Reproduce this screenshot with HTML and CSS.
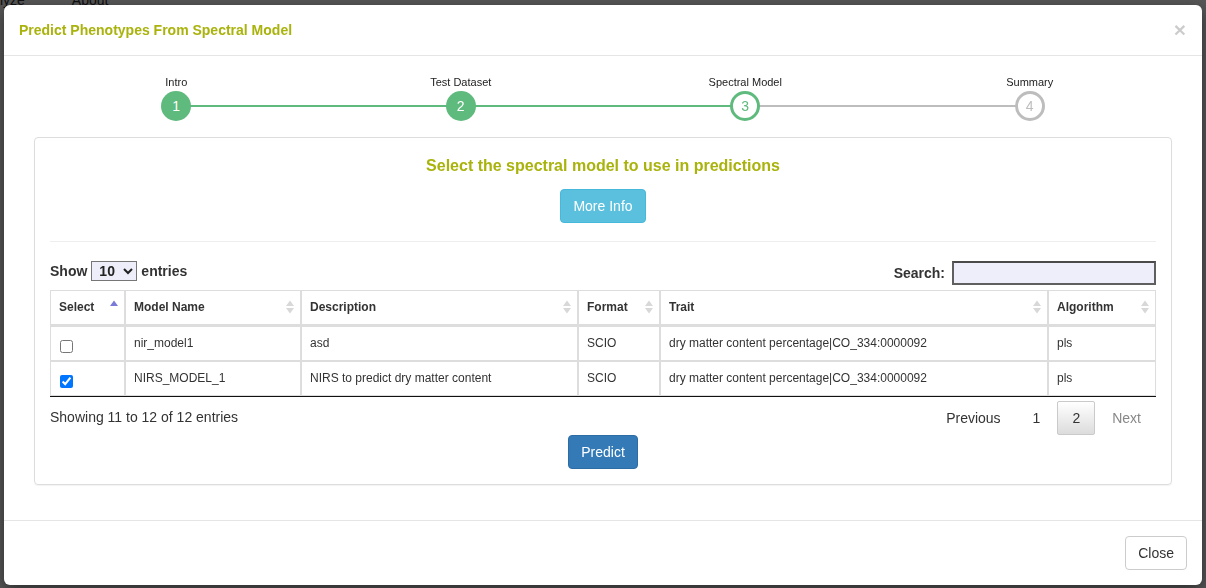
FILE: index.html
```html
<!DOCTYPE html>
<html>
<head>
<meta charset="utf-8">
<link rel="stylesheet" href="styles.css">
</head>
<body>
<nav class="topnav"><span>Analyze</span><span>About</span></nav>
<div class="backdrop"></div>
<div class="modal">
  <div class="modal-header">
    <h4 class="modal-title">Predict Phenotypes From Spectral Model</h4>
    <span class="close">&times;</span>
  </div>
  <div class="modal-body">
    <div class="stepper">
      <div class="step done"><div class="step-label">Intro</div><div class="step-circle">1</div></div>
      <div class="step done"><div class="step-label">Test Dataset</div><div class="step-circle">2</div></div>
      <div class="step current"><div class="step-label">Spectral Model</div><div class="step-circle">3</div></div>
      <div class="step todo"><div class="step-label">Summary</div><div class="step-circle">4</div></div>
    </div>
    <div class="panel">
      <h3 class="panel-heading">Select the spectral model to use in predictions</h3>
      <div class="center"><button class="btn btn-info">More Info</button></div>
      <hr class="divider">
      <div class="controls">
        <label class="length">Show <select class="len-select"><option>10</option></select> entries</label>
        <label class="search">Search: <input type="text" class="search-input"></label>
      </div>
      <table class="dtable">
        <colgroup>
          <col style="width:75px"><col style="width:176px"><col style="width:277px"><col style="width:82px"><col style="width:388px"><col style="width:108px">
        </colgroup>
        <thead>
          <tr>
            <th><span>Select</span><svg class="sort" width="10" height="16" viewBox="0 0 10 16"><path d="M1 7 L5 1.5 L9 7 Z" fill="#7a7ad8"/></svg></th>
            <th><span>Model Name</span><svg class="sort" width="10" height="16" viewBox="0 0 10 16"><path d="M1 7 L5 1.5 L9 7 Z M1 9 L5 14.5 L9 9 Z" fill="#d8d8d8"/></svg></th>
            <th><span>Description</span><svg class="sort" width="10" height="16" viewBox="0 0 10 16"><path d="M1 7 L5 1.5 L9 7 Z M1 9 L5 14.5 L9 9 Z" fill="#d8d8d8"/></svg></th>
            <th><span>Format</span><svg class="sort" width="10" height="16" viewBox="0 0 10 16"><path d="M1 7 L5 1.5 L9 7 Z M1 9 L5 14.5 L9 9 Z" fill="#d8d8d8"/></svg></th>
            <th><span>Trait</span><svg class="sort" width="10" height="16" viewBox="0 0 10 16"><path d="M1 7 L5 1.5 L9 7 Z M1 9 L5 14.5 L9 9 Z" fill="#d8d8d8"/></svg></th>
            <th><span>Algorithm</span><svg class="sort" width="10" height="16" viewBox="0 0 10 16"><path d="M1 7 L5 1.5 L9 7 Z M1 9 L5 14.5 L9 9 Z" fill="#d8d8d8"/></svg></th>
          </tr>
        </thead>
        <tbody>
          <tr>
            <td><input type="checkbox" class="cb"></td>
            <td>nir_model1</td>
            <td>asd</td>
            <td>SCIO</td>
            <td>dry matter content percentage|CO_334:0000092</td>
            <td>pls</td>
          </tr>
          <tr>
            <td><input type="checkbox" class="cb" checked></td>
            <td>NIRS_MODEL_1</td>
            <td>NIRS to predict dry matter content</td>
            <td>SCIO</td>
            <td>dry matter content percentage|CO_334:0000092</td>
            <td>pls</td>
          </tr>
        </tbody>
      </table>
      <div class="info-row">
        <div class="info">Showing 11 to 12 of 12 entries</div>
        <div class="paginate">
          <span class="pbtn">Previous</span>
          <span class="pbtn">1</span>
          <span class="pbtn active">2</span>
          <span class="pbtn disabled">Next</span>
        </div>
      </div>
      <div class="center"><button class="btn btn-primary">Predict</button></div>
    </div>
  </div>
  <div class="modal-footer">
    <button class="btn btn-default">Close</button>
  </div>
</div>
</body>
</html>
```

FILE: styles.css
```css
* { box-sizing: border-box; }
html, body {
  margin: 0;
  padding: 0;
  width: 1206px;
  height: 588px;
  overflow: hidden;
  background: #fff;
  font-family: "Liberation Sans", Arial, sans-serif;
  font-size: 14px;
  color: #333;
}
.topnav {
  margin-top: -9px;
  margin-left: -25px;
  font-size: 14px;
  line-height: 18px;
  display: flex;
  gap: 47px;
}
.backdrop {
  position: fixed;
  inset: 0;
  background: rgba(0, 0, 0, 0.66);
}
.modal {
  position: absolute;
  left: 4px;
  top: 5px;
  width: 1198px;
  height: 580px;
  background: #fff;
  border-radius: 6px;
  box-shadow: 0 5px 15px rgba(0, 0, 0, 0.5);
  display: flex;
  flex-direction: column;
}
.modal-header {
  padding: 15px;
  height: 51px;
  border-bottom: 1px solid #e5e5e5;
  display: flex;
  justify-content: space-between;
  align-items: center;
}
.modal-title {
  margin: 0;
  font-size: 14px;
  line-height: 20px;
  font-weight: bold;
  color: #a9b30b;
}
.close {
  font-size: 21px;
  font-weight: bold;
  line-height: 20px;
  color: #000;
  opacity: 0.2;
  margin-right: 1px;
}
.modal-body {
  flex: 1;
  padding: 20px 30px 0;
}
.stepper {
  display: flex;
}
.step {
  flex: 1;
  position: relative;
  display: flex;
  flex-direction: column;
  align-items: center;
}
.step-label {
  font-size: 11px;
  line-height: 13px;
  color: #222;
}
.step-circle {
  position: relative;
  z-index: 1;
  margin-top: 2px;
  width: 30px;
  height: 30px;
  border-radius: 50%;
  display: flex;
  align-items: center;
  justify-content: center;
  font-size: 14px;
  line-height: 1;
}
.step::after {
  content: "";
  position: absolute;
  left: 50%;
  width: 100%;
  top: 29px;
  height: 2px;
  background: #5fba7d;
}
.step:nth-child(3)::after { background: #bdbdbd; }
.step:last-child::after { display: none; }
.step.done .step-circle { background: #5fba7d; color: #fff; }
.step.current .step-circle { background: #fff; border: 3px solid #5fba7d; color: #5fba7d; }
.step.todo .step-circle { background: #fff; border: 3px solid #bdbdbd; color: #bdbdbd; }

.panel {
  margin-top: 16px;
  border: 1px solid #ddd;
  border-radius: 4px;
  padding: 15px;
  box-shadow: 0 1px 1px rgba(0, 0, 0, 0.05);
}
.panel-heading {
  margin: 2px 0 12px;
  font-size: 16px;
  line-height: 22px;
  font-weight: bold;
  text-align: center;
  color: #a9b30b;
}
.center { text-align: center; }
.btn {
  display: inline-block;
  font-family: inherit;
  font-size: 14px;
  line-height: 20px;
  padding: 6px 12px;
  border: 1px solid transparent;
  border-radius: 4px;
  cursor: pointer;
}
.btn-info { background: #5bc0de; border-color: #46b8da; color: #fff; }
.btn-primary { background: #337ab7; border-color: #2e6da4; color: #fff; }
.btn-default { background: #fff; border-color: #ccc; color: #333; }
.divider {
  margin: 18px 0 19px;
  border: 0;
  border-top: 1px solid #eee;
  height: 0;
}
.controls {
  display: flex;
  justify-content: space-between;
  align-items: flex-start;
  font-weight: bold;
}
.length {
  display: flex;
  align-items: center;
  gap: 4px;
  line-height: 20px;
  height: 20px;
}
.len-select {
  font-family: inherit;
  font-size: 14px;
  font-weight: bold;
  height: 20px;
  width: 46px;
  padding: 0 0 0 3px;
  border: 1px solid #767676;
  border-radius: 0;
  background: #eeeefb;
  color: #222;
}
.search {
  display: flex;
  align-items: center;
  gap: 7px;
  height: 24px;
}
.search-input {
  width: 204px;
  height: 24px;
  margin: 0;
  border: 2px solid #5f5f5f;
  border-top-color: #4a4a4a;
  background: #eeeefb;
}
.dtable {
  margin-top: 5px;
  width: 1106px;
  table-layout: fixed;
  border-collapse: separate;
  border-spacing: 0;
  border-bottom: 1px solid #111;
  font-size: 12px;
}
.dtable th, .dtable td {
  border: 1px solid #ddd;
  padding: 8px;
  height: 35px;
  line-height: 17px;
  text-align: left;
  vertical-align: top;
  white-space: nowrap;
  overflow: hidden;
}
.dtable th {
  font-weight: bold;
  color: #333;
  position: relative;
  height: 36px;
  border-bottom-width: 2px;
}
.dtable td { color: #333; }
.sort {
  position: absolute;
  right: 5px;
  top: 8px;
}
.cb {
  display: block;
  margin: 5px 0 -1px 1px;
  width: 13px;
  height: 13px;
}
.info-row {
  display: flex;
  justify-content: space-between;
  align-items: flex-start;
}
.info {
  padding-top: 10px;
  line-height: 20px;
}
.paginate {
  margin-top: 4px;
  display: flex;
}
.pbtn {
  display: inline-block;
  margin-left: 2px;
  padding: 7px 14px;
  line-height: 18px;
  border: 1px solid transparent;
  border-radius: 2px;
  color: #333;
}
.pbtn.active {
  border-color: #cacaca;
  background: linear-gradient(to bottom, #ffffff 0%, #dcdcdc 100%);
}
.pbtn.disabled { color: #888; }
.modal-footer {
  padding: 15px;
  border-top: 1px solid #e5e5e5;
  text-align: right;
}
```
